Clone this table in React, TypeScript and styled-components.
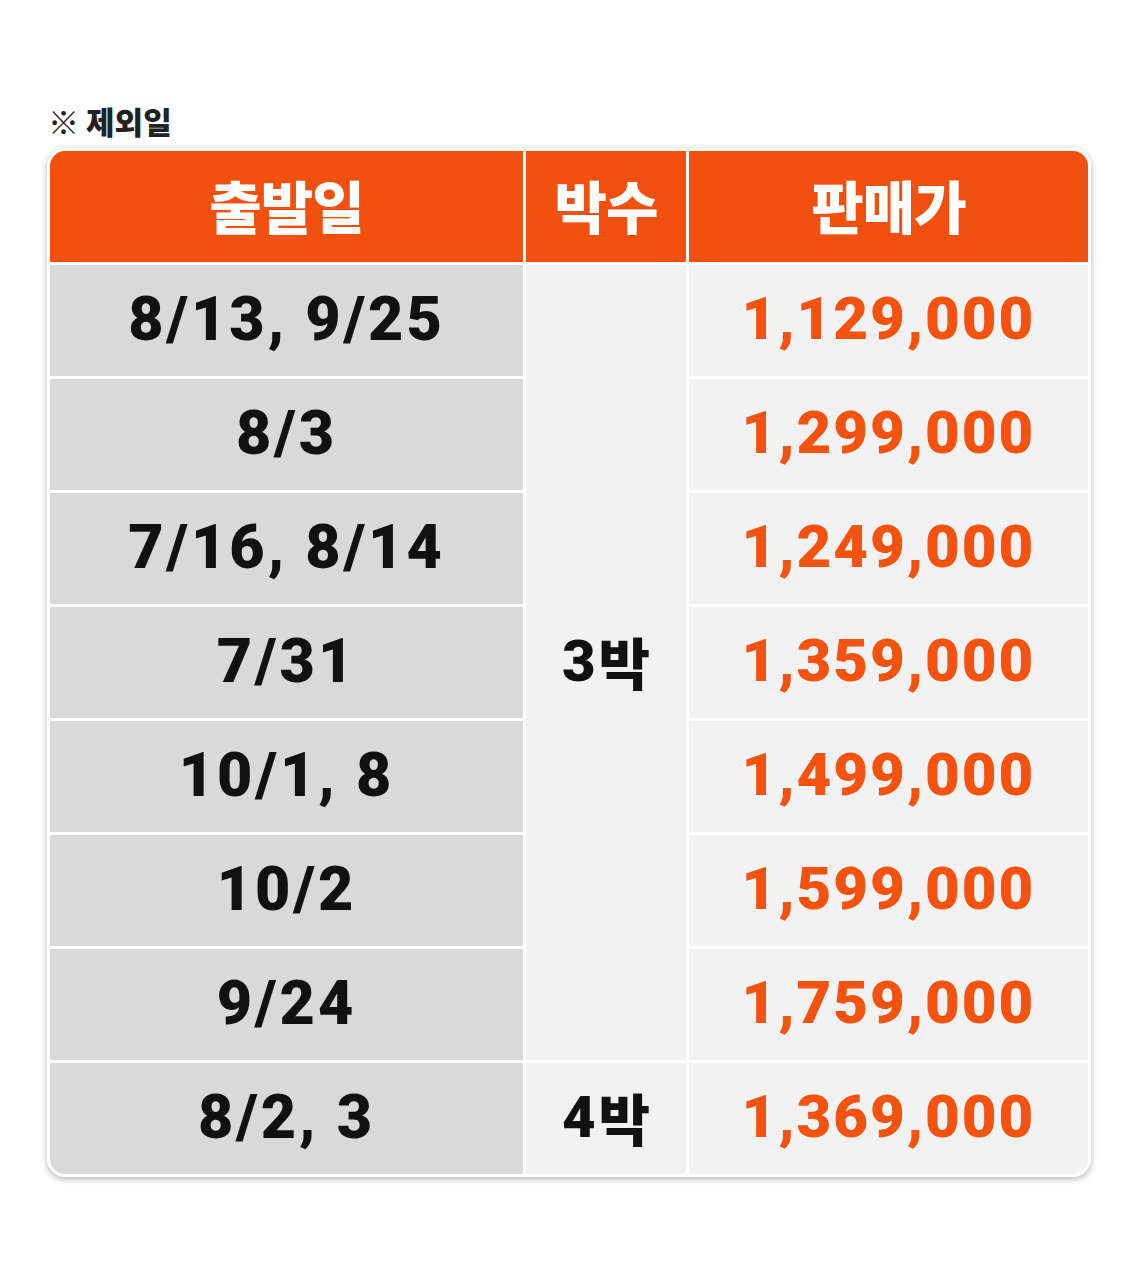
import styled, { createGlobalStyle } from 'styled-components'

const GlobalStyle = createGlobalStyle`
  body {
    margin: 0;
    background: #ffffff;
    font-family: Roboto, "Noto Sans CJK KR", sans-serif;
  }
`

const Page = styled.div`
  width: 1137px;
  height: 1280px;
  padding: 101px 0 0 47px;
  box-sizing: border-box;
`

const Note = styled.h3`
  margin: 0 0 7px 1px;
  font-family: "Noto Sans CJK KR", sans-serif;
  font-size: 31px;
  font-weight: 900;
  color: #222;
  line-height: 40px;
`

const Card = styled.div`
  width: 1044px;
  border: 3px solid #fff;
  border-radius: 18px;
  box-sizing: border-box;
  overflow: hidden;
  background: #fff;
  box-shadow: 0 2px 6px rgba(0, 0, 0, 0.3);
`

const Grid = styled.div`
  display: grid;
  grid-template-columns: 473px 160px 1fr;
  grid-template-rows: 111px repeat(8, 111px);
  gap: 3px;
  background: #fff;
`

const Head = styled.div`
  background: #f2500f;
  color: #fff;
  display: flex;
  align-items: center;
  justify-content: center;
  font-family: "Noto Sans CJK KR", sans-serif;
  font-weight: 900;
  font-size: 57px;
  letter-spacing: -1px;
  padding-bottom: 6px;
`

const Cell = styled.div<{ $tone: 'dark' | 'light'; $span?: number; $price?: boolean }>`
  background: ${p => (p.$tone === 'dark' ? '#d9d9d9' : '#f2f2f2')};
  color: ${p => (p.$price ? '#f4530f' : '#111')};
  grid-row: ${p => (p.$span ? `span ${p.$span}` : 'auto')};
  display: flex;
  align-items: center;
  justify-content: center;
  font-family: Roboto, "Noto Sans CJK KR", sans-serif;
  font-weight: 900;
  font-size: ${p => (p.$price ? '60px' : '61px')};
  letter-spacing: ${p => (p.$price ? '2px' : '3px')};
  padding-bottom: 4px;
`

const Nights = styled.span`
  display: inline-flex;
  align-items: center;
  font-size: 58px;
  letter-spacing: 0;
  span {
    font-family: "Noto Sans CJK KR", sans-serif;
    font-weight: 900;
    font-size: 56px;
    margin-left: 3px;
  }
`

const rows = [
  { date: '8/13, 9/25', price: '1,129,000' },
  { date: '8/3', price: '1,299,000' },
  { date: '7/16, 8/14', price: '1,249,000' },
  { date: '7/31', price: '1,359,000' },
  { date: '10/1, 8', price: '1,499,000' },
  { date: '10/2', price: '1,599,000' },
  { date: '9/24', price: '1,759,000' },
  { date: '8/2, 3', price: '1,369,000' },
]

export default function App() {
  return (
    <>
      <GlobalStyle />
      <Page>
        <Note>※ 제외일</Note>
        <Card>
          <Grid>
            <Head>출발일</Head>
            <Head>박수</Head>
            <Head>판매가</Head>
            {rows.map((r, i) => (
              <>
                <Cell key={`d${i}`} $tone="dark">{r.date}</Cell>
                {i === 0 && (
                  <Cell key="n3" $tone="light" $span={7}>
                    <Nights>3<span>박</span></Nights>
                  </Cell>
                )}
                {i === 7 && (
                  <Cell key="n4" $tone="light">
                    <Nights>4<span>박</span></Nights>
                  </Cell>
                )}
                <Cell key={`p${i}`} $tone="light" $price>{r.price}</Cell>
              </>
            ))}
          </Grid>
        </Card>
      </Page>
    </>
  )
}
